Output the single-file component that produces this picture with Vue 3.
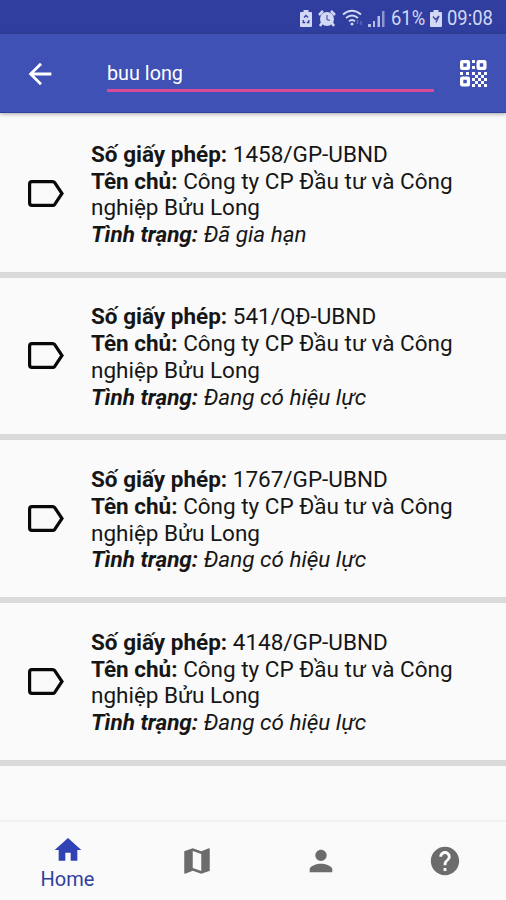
<script setup>
import { ref } from 'vue'

const query = ref('buu long')
const owner = 'Công ty CP Đầu tư và Công nghiệp Bửu Long'
const licenses = [
  { id: '1458/GP-UBND', status: 'Đã gia hạn' },
  { id: '541/QĐ-UBND', status: 'Đang có hiệu lực' },
  { id: '1767/GP-UBND', status: 'Đang có hiệu lực' },
  { id: '4148/GP-UBND', status: 'Đang có hiệu lực' },
]
const squares = [[0, 0], [11, 0], [0, 11]]
const dots = [[8, 0], [8, 4], [0, 8], [4, 8]]
for (let r = 0; r < 5; r++) {
  for (let c = 0; c < 5; c++) {
    if ((r + c) % 2 === 0) dots.push([8 + c * 2, 8 + r * 2])
  }
}
</script>

<template>
  <div class="screen">
    <div class="status">
      <svg class="s-batt" viewBox="0 0 12 17"><path d="M3.5 0h5v2H11q1 0 1 1v13q0 1-1 1H1q-1 0-1-1V3q0-1 1-1h2.500z" fill="#d3d8f5" /><path d="M4 7.500 6 5.500l2 2M3.200 10v2.500h2M8.800 10v2.500h-2" fill="none" stroke="#303f9f" stroke-width="1.300" /></svg>
      <svg class="s-alarm" viewBox="0 0 18 17"><circle cx="9" cy="9" r="7" fill="#d3d8f5" /><path d="M1 5 5 1M17 5l-4-4M4 13l-2 3M14 13l2 3" stroke="#d3d8f5" stroke-width="2.500" /><path d="M9 5v4.500l3 1" fill="none" stroke="#4a58b0" stroke-width="1.200" /></svg>
      <svg class="s-wifi" viewBox="0 0 22 18"><g fill="none" stroke="#d3d8f5" stroke-width="1.900"><path d="M1 5.500Q10 -2 19 5.500" /><path d="M4 9q6-5 12 0" /><path d="M7 12.300q3-2.500 6 0" /></g><circle cx="10" cy="15" r="1.500" fill="#d3d8f5" /><path d="M15.500 11v4M19 12v4" stroke="#5c69ba" stroke-width="1.500" /></svg>
      <svg class="s-signal" viewBox="0 0 17 17"><path d="M0 14h3v3H0zM5 11h2v6H5zM9.500 6h2.500v11H9.500z" fill="#b5bce6" /><path d="M14 1h2.500v16H14z" fill="#8c96d2" /></svg>
      <span class="pct">61%</span>
      <svg class="s-charge" viewBox="0 0 12 17"><path d="M3.500 0h5v2H11q1 0 1 1v13q0 1-1 1H1q-1 0-1-1V3q0-1 1-1h2.500z" fill="#d3d8f5" /><path d="M3 6.500 5.500 9.500 9 6 6 12.500" fill="none" stroke="#3d4aa0" stroke-width="1.300" /></svg>
      <span class="clock">09:08</span>
    </div>

    <header class="bar">
      <svg class="back" viewBox="0 0 24 24"><path fill="#fff" d="M20 11H7.830l5.590-5.590L12 4l-8 8 8 8 1.410-1.410L7.830 13H20v-2z" /></svg>
      <div class="field">{{ query }}</div>
      <svg class="qr" viewBox="0 0 18 18">
        <rect v-for="(s, i) in squares" :key="'s' + i" :x="s[0] + 1.1" :y="s[1] + 1.1" width="4.500" height="4.500" rx=".4" fill="none" stroke="#fff" stroke-width="2.200" />
        <rect v-for="(d, i) in dots" :key="'d' + i" :x="d[0]" :y="d[1]" width="2" height="2" fill="#fff" />
      </svg>
    </header>

    <main class="list">
      <article v-for="item in licenses" :key="item.id" class="item">
        <svg class="tag" viewBox="0 0 36 27"><path d="M4 1.600h20.500q1.500 0 2.400 1.200L34 13.500 26.900 24.200q-.9 1.200-2.400 1.200H4q-2.400 0-2.400-2.400V4Q1.600 1.600 4 1.600z" fill="none" stroke="#080808" stroke-width="3.200" /></svg>
        <div class="text">
          <div><b>Số giấy phép:</b> {{ item.id }}</div>
          <div><b>Tên chủ:</b> {{ owner }}</div>
          <div class="state"><b>Tình trạng:</b> {{ item.status }}</div>
        </div>
      </article>
    </main>

    <nav class="tabs">
      <div class="tab active">
        <svg class="home" viewBox="0 0 24 24"><path d="M10 20v-6h4v6h5v-8h3L12 3 2 12h3v8z" /></svg>
        <span>Home</span>
      </div>
      <div class="tab"><svg viewBox="0 0 24 24"><path d="M20.500 3l-.160.030L15 5.100 9 3 3.360 4.900c-.210.070-.360.250-.360.480V20.500c0 .280.220.500.500.500l.160-.030L9 18.900l6 2.100 5.640-1.900c.210-.070.360-.250.360-.480V3.500c0-.280-.220-.500-.500-.500zM15 19l-6-2.110V5l6 2.110V19z" /></svg></div>
      <div class="tab"><svg viewBox="0 0 24 24"><path d="M12 12c2.210 0 4-1.790 4-4s-1.790-4-4-4-4 1.790-4 4 1.790 4 4 4zm0 2c-2.670 0-8 1.340-8 4v2h16v-2c0-2.660-5.330-4-8-4z" /></svg></div>
      <div class="tab"><svg viewBox="0 0 24 24"><path d="M12 2C6.480 2 2 6.480 2 12s4.480 10 10 10 10-4.480 10-10S17.520 2 12 2zm1 17h-2v-2h2v2zm2.070-7.750l-.9.920C13.450 12.900 13 13.500 13 15h-2v-.5c0-1.100.450-2.100 1.170-2.830l1.240-1.260c.370-.360.590-.860.590-1.410 0-1.100-.9-2-2-2s-2 .9-2 2H8c0-2.210 1.790-4 4-4s4 1.790 4 4c0 .880-.360 1.680-.930 2.250z" /></svg></div>
    </nav>
  </div>
</template>

<style>
body { margin: 0; background: #fafafa; }
</style>

<style scoped>
.screen { width: 506px; height: 900px; display: flex; flex-direction: column; overflow: hidden; background: #fafafa; font-family: Roboto, "Noto Sans", sans-serif; color: #161616; }
.status { height: 34px; flex: none; box-sizing: border-box; padding: 2px 13px 0 0; display: flex; justify-content: flex-end; align-items: center; background: #303f9f; color: #d3d8f5; font-size: 20px; }
.status svg { flex: none; }
.s-batt, .s-charge { width: 12px; height: 17px; }
.s-alarm { width: 18px; height: 17px; margin-left: 6px; }
.s-wifi { width: 22px; height: 18px; margin-left: 6px; }
.s-signal { width: 17px; height: 17px; margin-left: 4px; }
.pct, .clock { transform-origin: left center; transform: scaleX(.92); white-space: nowrap; }
.pct { width: 34px; margin: 0 5px 0 6px; }
.clock { width: 46px; margin-left: 5px; }
.bar { height: 79px; flex: none; box-sizing: border-box; padding: 1px 19px 0 23px; display: flex; align-items: center; background: #3f51b5; border-bottom: 1px solid #303f9f; box-shadow: 0 1px 4px rgba(0, 0, 0, .35); z-index: 1; }
.back { width: 34px; height: 34px; }
.field { width: 327px; height: 38px; box-sizing: border-box; margin: 0 0 2px 50px; padding-top: 8px; line-height: 24px; border-bottom: 3px solid #d84b98; color: #fff; font-size: 19.800px; }
.qr { width: 27px; height: 27px; margin-left: auto; }
.list { flex: 1; padding-top: 2px; }
.item { height: 162.660px; box-sizing: border-box; border-bottom: 6px solid #dadada; display: flex; align-items: center; padding-left: 28px; }
.tag { width: 36px; height: 27px; flex: none; margin-right: 27px; }
.text { width: 380px; font-size: 22.500px; line-height: 26.800px; padding-top: 2px; }
.state { font-style: italic; }
.tabs { height: 80px; flex: none; box-sizing: border-box; border-top: 2px solid #f1f1f1; display: flex; }
.tab { width: 124px; flex: none; display: flex; flex-direction: column; align-items: center; justify-content: center; fill: #6c6c6c; box-sizing: border-box; }
.tab svg { width: 34px; height: 34px; }
.active { width: 135px; fill: #3142b5; color: #303f9f; font-size: 20px; padding-top: 4px; }
.tab .home { width: 32px; height: 32px; }
.active span { line-height: 26px; }
</style>
